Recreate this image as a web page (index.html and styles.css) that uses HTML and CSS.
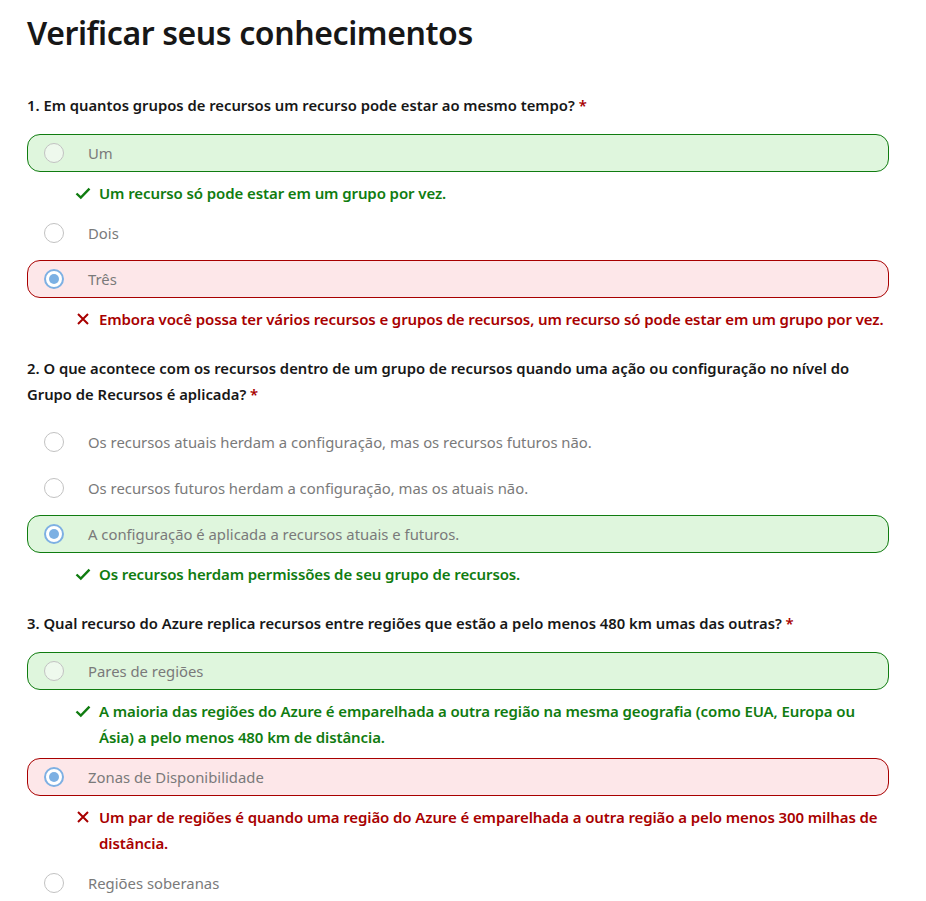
FILE: index.html
```html
<!DOCTYPE html>
<html lang="pt-BR">
<head>
<meta charset="utf-8">
<title>Verificar seus conhecimentos</title>
<link rel="stylesheet" href="styles.css">
</head>
<body>
<main class="quiz">
  <h1 class="title">Verificar seus conhecimentos</h1>

  <section class="question">
    <h2 class="q-text">1. Em quantos grupos de recursos um recurso pode estar ao mesmo tempo? <span class="req">*</span></h2>
    <div class="options">
      <div class="option correct"><span class="radio"></span><span class="label">Um</span></div>
      <div class="feedback ok"><span class="icon"><svg viewBox="0 0 16 16" width="16" height="16"><path d="M1.5 8.5 L5.8 12.6 L14.5 3.6" fill="none" stroke="currentColor" stroke-width="2.4"/></svg></span><span>Um recurso só pode estar em um grupo por vez.</span></div>
      <div class="option"><span class="radio"></span><span class="label">Dois</span></div>
      <div class="option wrong"><span class="radio checked"></span><span class="label">Três</span></div>
      <div class="feedback bad"><span class="icon"><svg viewBox="0 0 16 16" width="16" height="16"><path d="M3 3 L13 13 M13 3 L3 13" fill="none" stroke="currentColor" stroke-width="2"/></svg></span><span>Embora você possa ter vários recursos e grupos de recursos, um recurso só pode estar em um grupo por vez.</span></div>
    </div>
  </section>

  <section class="question">
    <h2 class="q-text">2. O que acontece com os recursos dentro de um grupo de recursos quando uma ação ou configuração no nível do Grupo de Recursos é aplicada? <span class="req">*</span></h2>
    <div class="options">
      <div class="option"><span class="radio"></span><span class="label">Os recursos atuais herdam a configuração, mas os recursos futuros não.</span></div>
      <div class="option"><span class="radio"></span><span class="label">Os recursos futuros herdam a configuração, mas os atuais não.</span></div>
      <div class="option correct"><span class="radio checked"></span><span class="label">A configuração é aplicada a recursos atuais e futuros.</span></div>
      <div class="feedback ok"><span class="icon"><svg viewBox="0 0 16 16" width="16" height="16"><path d="M1.5 8.5 L5.8 12.6 L14.5 3.6" fill="none" stroke="currentColor" stroke-width="2.4"/></svg></span><span>Os recursos herdam permissões de seu grupo de recursos.</span></div>
    </div>
  </section>

  <section class="question">
    <h2 class="q-text">3. Qual recurso do Azure replica recursos entre regiões que estão a pelo menos 480 km umas das outras? <span class="req">*</span></h2>
    <div class="options">
      <div class="option correct"><span class="radio"></span><span class="label">Pares de regiões</span></div>
      <div class="feedback ok"><span class="icon"><svg viewBox="0 0 16 16" width="16" height="16"><path d="M1.5 8.5 L5.8 12.6 L14.5 3.6" fill="none" stroke="currentColor" stroke-width="2.4"/></svg></span><span>A maioria das regiões do Azure é emparelhada a outra região na mesma geografia (como EUA, Europa ou Ásia) a pelo menos 480 km de distância.</span></div>
      <div class="option wrong"><span class="radio checked"></span><span class="label">Zonas de Disponibilidade</span></div>
      <div class="feedback bad"><span class="icon"><svg viewBox="0 0 16 16" width="16" height="16"><path d="M3 3 L13 13 M13 3 L3 13" fill="none" stroke="currentColor" stroke-width="2"/></svg></span><span>Um par de regiões é quando uma região do Azure é emparelhada a outra região a pelo menos 300 milhas de distância.</span></div>
      <div class="option"><span class="radio"></span><span class="label">Regiões soberanas</span></div>
    </div>
  </section>
</main>
</body>
</html>
```
FILE: styles.css
```css
* { box-sizing: border-box; }
html, body { margin: 0; padding: 0; background: #fff; }
body {
  font-family: "Noto Sans", "Open Sans", sans-serif;
  color: #171717;
}
.quiz {
  width: 862px;
  margin-left: 27px;
  padding-top: 11px;
}
.title {
  font-size: 32px;
  font-weight: 600;
  line-height: 44px;
  margin: 0 0 37px 0;
  letter-spacing: -0.4px;
}
.question { margin-bottom: 23px; }
.q-text {
  font-size: 14.8px;
  font-weight: 600;
  line-height: 26px;
  margin: 0 0 16px 0;
}
.req { color: #a80000; }
.options { display: flex; flex-direction: column; gap: 8px; }
.option {
  display: flex;
  align-items: center;
  height: 38px;
  padding-left: 16px;
  border: 1px solid transparent;
  border-radius: 13px;
  font-size: 14.85px;
  color: #7a7a7a;
}
.option.correct { background: #dff6dd; border-color: #107c10; }
.option.wrong { background: #fde7e9; border-color: #a80000; }
.radio {
  width: 20px;
  height: 20px;
  border-radius: 50%;
  border: 1px solid #c2c2c2;
  background: #fff;
  flex: none;
  margin-right: 24px;
  display: flex;
  align-items: center;
  justify-content: center;
}
.option.correct .radio { background: #eef9ed; }
.option.wrong .radio { background: #fff; }
.radio.checked { border: 2px solid #7eb0e3; background: #fff !important; }
.radio.checked::after {
  content: "";
  width: 10px;
  height: 10px;
  border-radius: 50%;
  background: #7cb0e3;
}
.feedback {
  display: flex;
  align-items: flex-start;
  padding-left: 48px;
  font-size: 15px;
  font-weight: 600;
  line-height: 26px;
  letter-spacing: -0.1px;
}
.feedback .icon { flex: none; width: 24px; height: 26px; display: flex; align-items: center; }
.feedback.ok { color: #107c10; }
.feedback.bad { color: #a80000; }
```
